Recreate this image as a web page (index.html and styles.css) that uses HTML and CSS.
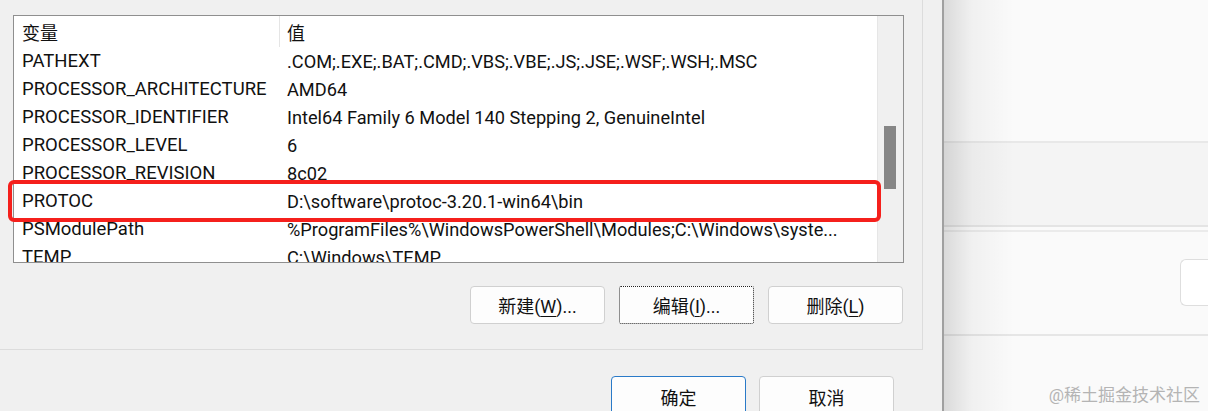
FILE: index.html
```html
<!DOCTYPE html>
<html lang="zh-CN">
<head>
  <meta charset="UTF-8">
  <meta name="viewport" content="width=device-width, initial-scale=1.0">
  <title>环境变量</title>
  <link rel="stylesheet" href="styles.css">
</head>
<body>
  <div id="screen">
    <div id="dialog">
      <div id="group">
        <div id="list">
          <div id="table">
            <div class="row head">
              <div class="cell name">变量</div>
              <div class="cell value">值</div>
            </div>
            <div class="row">
              <div class="cell name">PATHEXT</div>
              <div class="cell value">.COM;.EXE;.BAT;.CMD;.VBS;.VBE;.JS;.JSE;.WSF;.WSH;.MSC</div>
            </div>
            <div class="row">
              <div class="cell name">PROCESSOR_ARCHITECTURE</div>
              <div class="cell value">AMD64</div>
            </div>
            <div class="row">
              <div class="cell name">PROCESSOR_IDENTIFIER</div>
              <div class="cell value">Intel64 Family 6 Model 140 Stepping 2, GenuineIntel</div>
            </div>
            <div class="row">
              <div class="cell name">PROCESSOR_LEVEL</div>
              <div class="cell value">6</div>
            </div>
            <div class="row">
              <div class="cell name">PROCESSOR_REVISION</div>
              <div class="cell value">8c02</div>
            </div>
            <div class="row">
              <div class="cell name">PROTOC</div>
              <div class="cell value">D:\software\protoc-3.20.1-win64\bin</div>
            </div>
            <div class="row">
              <div class="cell name">PSModulePath</div>
              <div class="cell value">%ProgramFiles%\WindowsPowerShell\Modules;C:\Windows\syste...</div>
            </div>
            <div class="row">
              <div class="cell name">TEMP</div>
              <div class="cell value">C:\Windows\TEMP</div>
            </div>
          </div>
          <div id="scrollbar">
            <div id="thumb"></div>
          </div>
        </div>
        <div class="actions">
          <button class="btn">新建(<u>W</u>)...</button>
          <button class="btn focused">编辑(<u>I</u>)...</button>
          <button class="btn">删除(<u>L</u>)</button>
        </div>
      </div>
      <div class="footer">
        <button class="btn primary">确定</button>
        <button class="btn">取消</button>
      </div>
      <div id="highlight"></div>
    </div>
    <div id="side">
      <div class="pane top"></div>
      <div class="pane grey"></div>
      <div class="pane middle">
        <div class="field"></div>
      </div>
      <div class="pane bottom">
        <span class="watermark">@稀土掘金技术社区</span>
      </div>
    </div>
  </div>
</body>
</html>
```

FILE: styles.css
```css
body {
    margin: 0;
    padding: 0;
    background-color: #f0f0f0;
    font-family: Roboto, "Noto Sans CJK SC", sans-serif;
    color: #111;
    overflow: hidden;
}

#screen {
    display: flex;
    width: 1208px;
    height: 411px;
    overflow: hidden;
}

#dialog {
    position: relative;
    width: 942px;
    flex-shrink: 0;
}

#group {
    width: 923px;
    height: 350px;
    padding: 15px 0 0 13px;
    box-sizing: border-box;
    border-right: 1px solid #dcdcdc;
    border-bottom: 1px solid #dcdcdc;
}

#list {
    display: flex;
    width: 891px;
    height: 248px;
    border: 1px solid #8f8f8f;
    box-sizing: border-box;
    background-color: #fff;
    overflow: hidden;
}

#table {
    flex-grow: 1;
    min-width: 0;
}

.row {
    display: flex;
    height: 28px;
    align-items: center;
    font-size: 18.5px;
    white-space: nowrap;
}

.row.head {
    height: 31px;
}

.cell {
    box-sizing: border-box;
}

.cell.name {
    width: 266px;
    padding-left: 8px;
    flex-shrink: 0;
}

.cell.value {
    flex-grow: 1;
    min-width: 0;
    padding-left: 7px;
    padding-right: 10px;
    font-size: 18.2px;
    overflow: hidden;
}

.head .cell {
    font-size: 18px;
}

.head .cell.name {
    align-self: stretch;
    display: flex;
    align-items: center;
    border-right: 1px solid #e5e5e5;
}

#scrollbar {
    width: 26px;
    flex-shrink: 0;
    background-color: #f0f0f0;
    border-left: 1px solid #e6e6e6;
    box-sizing: border-box;
    padding: 110px 0 0 6px;
}

#thumb {
    width: 12px;
    height: 63px;
    background-color: #868686;
}

.actions {
    display: flex;
    justify-content: flex-end;
    gap: 14px;
    margin-top: 23px;
    padding-right: 19px;
}

.btn {
    width: 135px;
    height: 38px;
    background-color: #fdfdfd;
    border: 1px solid #d0d0d0;
    border-radius: 4px;
    font-family: Roboto, "Noto Sans CJK SC", sans-serif;
    font-size: 18px;
    color: #111;
    padding: 0;
}

.btn u {
    text-underline-offset: 3px;
}

.btn.focused {
    border: 1px dotted #222;
    border-radius: 2px;
}

.footer {
    display: flex;
    justify-content: flex-end;
    gap: 13px;
    margin-top: 26px;
    padding-right: 48px;
}

.footer .btn {
    height: 42px;
    border-radius: 4px 4px 0 0;
}

.btn.primary {
    border-color: #2a7ac8;
}

#highlight {
    position: absolute;
    left: 8px;
    top: 180px;
    width: 873px;
    height: 42px;
    border: 4px solid #f5201c;
    border-radius: 6px;
    box-sizing: border-box;
}

#side {
    position: relative;
    flex-grow: 1;
    display: flex;
    flex-direction: column;
    border-left: 2px solid #a0a0a0;
    background-color: #fafafa;
}

#side::before {
    content: "";
    position: absolute;
    top: 0;
    bottom: 0;
    left: 0;
    width: 70px;
    background: linear-gradient(to right, rgba(0, 0, 0, 0.13), rgba(0, 0, 0, 0.04) 40%, rgba(0, 0, 0, 0));
}

.pane.top {
    height: 141px;
    border-bottom: 2px solid #e8e8e8;
}

.pane.grey {
    height: 82px;
    background-color: #f4f4f4;
    border-bottom: 2px solid #e4e4e4;
}

.pane.middle {
    margin-top: 3px;
    border-top: 2px solid #ebebeb;
    border-bottom: 2px solid #e6e6e6;
    padding-top: 27px;
    padding-left: 236px;
    box-sizing: border-box;
    height: 106px;
}

.field {
    height: 45px;
    background-color: #fff;
    border: 1px solid #dedede;
    border-right: none;
    border-radius: 6px 0 0 6px;
}

.pane.bottom {
    flex-grow: 1;
    display: flex;
    justify-content: flex-end;
    align-items: flex-end;
    padding: 0 8px 5px 0;
}

.watermark {
    font-size: 17px;
    color: #b4b4b4;
}
```
